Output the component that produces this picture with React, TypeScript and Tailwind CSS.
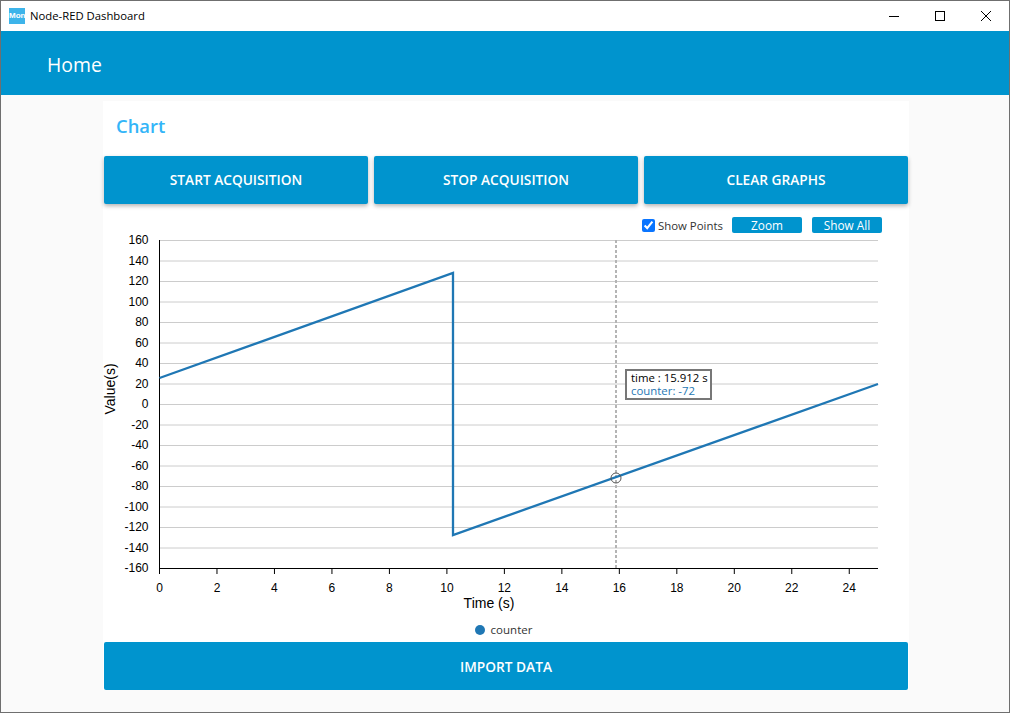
const BTN = 'flex-1 h-12 rounded-[2px] bg-[#0094ce] text-white text-[13.7px] font-semibold';
const SHADOW = 'shadow-[0_2px_4px_rgba(0,0,0,0.3)]';
const SMALL_BTN = 'w-[70px] h-[16px] rounded-[2px] bg-[#0094ce] text-white text-[11.8px] leading-[16px]';
const UI_FONT = { fontFamily: '"Open Sans", "Noto Sans", sans-serif' };

const yTicks = [160, 140, 120, 100, 80, 60, 40, 20, 0, -20, -40, -60, -80, -100, -120, -140, -160];
const xTicks = [0, 2, 4, 6, 8, 10, 12, 14, 16, 18, 20, 22, 24];
const xPos = (v: number) => 159.5 + v * 28.74;
const yPos = (v: number) => 240.5 + (160 - v) * 1.025;

function Chart() {
  return (
    <svg viewBox="104 234 804 388" width={804} height={388} className="block overflow-visible" style={{ fontFamily: '"Liberation Sans", Arial, sans-serif' }}>
      {yTicks.map(v => (
        <line key={v} x1={159} x2={878} y1={yPos(v)} y2={yPos(v)} stroke="#cccccc" strokeWidth={1} />
      ))}
      <line x1={159.5} x2={159.5} y1={240} y2={569} stroke="#000" strokeWidth={1} />
      <line x1={159} x2={878} y1={568.5} y2={568.5} stroke="#000" strokeWidth={1} />
      {yTicks.map(v => (
        <text key={v} x={148.5} y={yPos(v) + 3.5} textAnchor="end" fontSize={12} fill="#000">{v}</text>
      ))}
      {xTicks.map(v => (
        <g key={v}>
          <line x1={xPos(v)} x2={xPos(v)} y1={568} y2={574} stroke="#000" strokeWidth={1} />
          <text x={xPos(v)} y={592} textAnchor="middle" fontSize={12} fill="#000">{v}</text>
        </g>
      ))}
      <text x={489} y={608} textAnchor="middle" fontSize={14} fill="#000">Time (s)</text>
      <text transform="translate(115 389) rotate(-90)" textAnchor="middle" fontSize={14} fill="#000">Value(s)</text>
      <line x1={616} x2={616} y1={240} y2={568} stroke="#b4b4b4" strokeWidth={2} strokeDasharray="3 2" />
      <polyline points="159.5,378 453,273 453,535 878,384" fill="none" stroke="#1f77b4" strokeWidth={2.3} />
      <circle cx={616} cy={478} r={5} fill="none" stroke="#555555" strokeWidth={1} />
    </svg>
  );
}

export default function App() {
  return (
    <div className="relative w-[1010px] h-[713px] flex flex-col border border-[#6f6f6f] bg-white overflow-hidden" style={UI_FONT}>
      <div className="h-[30px] flex items-center bg-white shrink-0">
        <div className="ml-2 w-4 h-4 bg-[#3db4ea] text-white text-[8px] font-bold leading-4 overflow-hidden text-center" style={{ fontFamily: '"Liberation Sans", sans-serif' }}>Mon</div>
        <span className="ml-[5px] text-[11.3px] text-black">Node-RED Dashboard</span>
        <div className="ml-auto flex items-center">
          <svg width={46} height={30} viewBox="0 0 46 30"><line x1={18} x2={28} y1={15.5} y2={15.5} stroke="#000" /></svg>
          <svg width={46} height={30} viewBox="0 0 46 30"><rect x={18.5} y={10.5} width={9} height={9} fill="none" stroke="#000" /></svg>
          <svg width={46} height={30} viewBox="0 0 46 30"><path d="M18 10 L28 20 M28 10 L18 20" fill="none" stroke="#000" /></svg>
        </div>
      </div>
      <div className="h-16 flex items-center bg-[#0094ce] pl-[46px] pt-[3px] shrink-0">
        <span className="text-[19.4px] text-white font-medium">Home</span>
      </div>
      <div className="flex-1 bg-[#fafafa] pt-[6px] pl-[102px]">
        <div className="w-[806px] h-[589px] bg-white flex flex-col px-px">
          <div className="h-[55px] flex items-center pl-3 pb-[5px]">
            <span className="text-[18.4px] text-[#33b5f8] font-semibold">Chart</span>
          </div>
          <div className="flex gap-[6px]">
            <button className={`${BTN} ${SHADOW}`}>START ACQUISITION</button>
            <button className={`${BTN} ${SHADOW}`}>STOP ACQUISITION</button>
            <button className={`${BTN} ${SHADOW}`}>CLEAR GRAPHS</button>
          </div>
          <div className="h-[438px] relative flex flex-col">
            <div className="flex items-center justify-end h-[18px] mt-3 pr-[26px]">
              <input type="checkbox" defaultChecked className="w-[13px] h-[13px] m-0 accent-[#0a75ff]" />
              <span className="ml-[3px] w-[64px] pt-[2px] text-[11.4px] text-[#333333] whitespace-nowrap">Show Points</span>
              <button className={`ml-[10px] ${SMALL_BTN}`}>Zoom</button>
              <button className={`ml-[10px] ${SMALL_BTN}`}>Show All</button>
            </div>
            <Chart />
            <div className="flex items-center justify-center h-4 pr-[5px]">
              <span className="w-[10px] h-[10px] rounded-full bg-[#1f77b4]" />
              <span className="ml-[6px] text-[11.5px] text-[#333333]">counter</span>
            </div>
            <div className="absolute left-[521px] top-[165px] w-[87px] h-[31px] border-2 border-[#777777] bg-white pl-[4px] text-[11.4px] leading-[13px]">
              <div className="text-black whitespace-nowrap">time : 15.912 s</div>
              <div className="text-[#1f77b4] whitespace-nowrap">counter: -72</div>
            </div>
          </div>
          <button className={`${BTN} flex-none w-full pt-[2px]`}>IMPORT DATA</button>
        </div>
      </div>
    </div>
  );
}
